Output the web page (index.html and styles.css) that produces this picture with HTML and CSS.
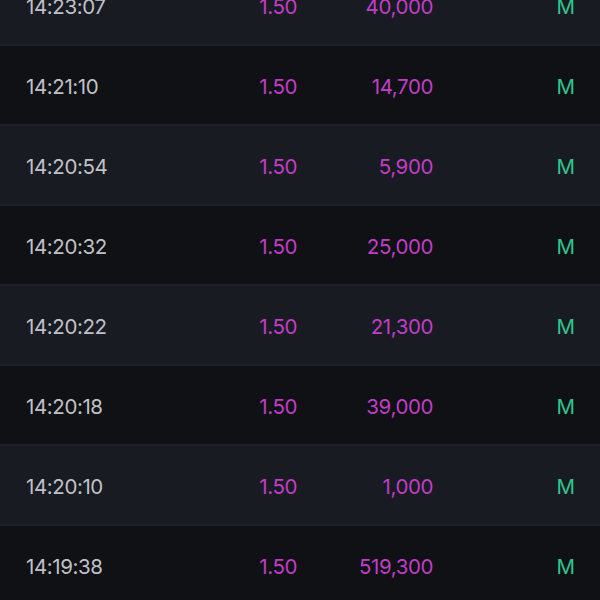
FILE: index.html
```html
<!DOCTYPE html>
<html>
<head>
<meta charset="utf-8">
<link rel="stylesheet" href="styles.css">
</head>
<body>
<div class="trades">
  <div class="row light"><span class="time">14:23:07</span><span class="price">1.50</span><span class="vol">40,000</span><span class="type">M</span></div>
  <div class="row dark"><span class="time">14:21:10</span><span class="price">1.50</span><span class="vol">14,700</span><span class="type">M</span></div>
  <div class="row light"><span class="time">14:20:54</span><span class="price">1.50</span><span class="vol">5,900</span><span class="type">M</span></div>
  <div class="row dark"><span class="time">14:20:32</span><span class="price">1.50</span><span class="vol">25,000</span><span class="type">M</span></div>
  <div class="row light"><span class="time">14:20:22</span><span class="price">1.50</span><span class="vol">21,300</span><span class="type">M</span></div>
  <div class="row dark"><span class="time">14:20:18</span><span class="price">1.50</span><span class="vol">39,000</span><span class="type">M</span></div>
  <div class="row light"><span class="time">14:20:10</span><span class="price">1.50</span><span class="vol">1,000</span><span class="type">M</span></div>
  <div class="row dark"><span class="time">14:19:38</span><span class="price">1.50</span><span class="vol">519,300</span><span class="type">M</span></div>
</div>
</body>
</html>
```
FILE: styles.css
```css
html, body {
  margin: 0;
  padding: 0;
  background: #0f1115;
  overflow: hidden;
}
.trades {
  margin-top: -34px;
  font-family: "Inter", "Lato", sans-serif;
  font-size: 20.5px;
  letter-spacing: -0.4px;
}
.row {
  box-sizing: border-box;
  height: 80px;
  display: grid;
  grid-template-columns: 1fr 100px 136px 142px;
  align-items: center;
  padding: 3px 25px 0 26px;
  border-bottom: 2px solid #1d2129;
}
.row.light { background: #181b22; }
.row.dark { background: #0f1115; }
.time { color: #c0c1c6; }
.price, .vol, .type { text-align: right; }
.price, .vol { color: #c23dc7; }
.type { color: #2ec58e; letter-spacing: 0; }
```
